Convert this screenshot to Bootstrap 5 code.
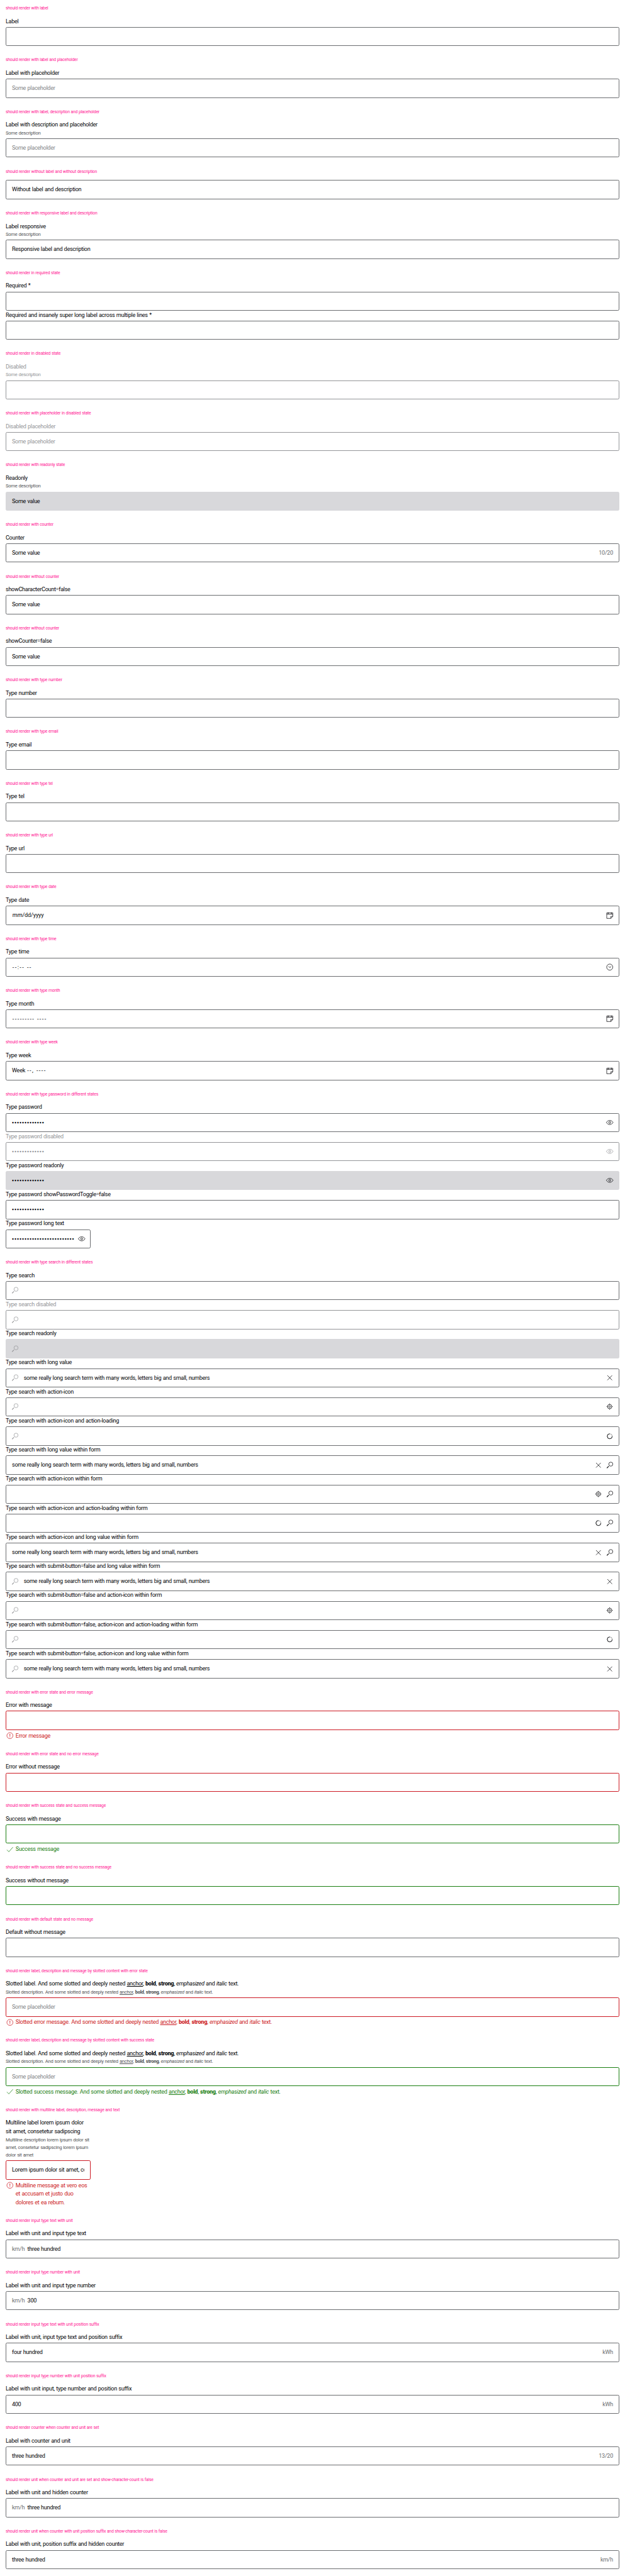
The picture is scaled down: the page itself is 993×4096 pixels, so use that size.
<!DOCTYPE html>
<html lang="en">
<head>
<meta charset="utf-8">
<meta name="viewport" content="width=device-width, initial-scale=1">
<title>Text field states</title>
<link href="https://cdn.jsdelivr.net/npm/bootstrap@5.3.0/dist/css/bootstrap.min.css" rel="stylesheet">
<style>
html{font-size:9.0273px}
body{font-family:Roboto,"Liberation Sans",sans-serif;font-size:1rem;line-height:1.5rem;color:#010205;letter-spacing:-.03em;word-spacing:.05em;background:#fff;overflow:hidden}
.case{padding:1rem}
.case h2{font-size:.75rem;line-height:.875rem;color:#ff1493;font-weight:400;letter-spacing:-.03em;word-spacing:.04em;margin:0 0 1rem;padding-top:.125rem}
.tag{padding-top:.0625rem;margin-bottom:-.0625rem}
.desc{font-size:.844rem;line-height:1.375rem;color:#535457;padding-top:.0625rem;margin-bottom:-.0625rem}
.field{display:flex;align-items:center;height:3.375rem;margin-top:.25rem;padding:.125rem 1rem 0;border:.125rem solid #6b6d70;border-radius:.25rem;font-size:1rem;line-height:1.5rem;color:#010205;white-space:nowrap;overflow:hidden;background:#fff}
.bare{margin-top:0}
.hint{color:#818386}
.unit{color:#6b6d70}
.off,.off .field,.off .desc{color:#949598;border-color:#949598}
.field.ro{background:#d8d8db;border-color:#d8d8db}
.bad .field{border-color:#cc1922}
.good .field{border-color:#197e10}
.msg{display:flex;gap:.25rem;margin-top:.25rem;color:#cc1922}
.msg>div{padding-top:.0625rem;margin-bottom:-.0625rem}
.good .msg{color:#197e10}
.narrow{width:15rem}
.ic{width:1.5rem;height:1.5rem;flex:none;fill:none;stroke:currentColor;stroke-width:1.3}
.field .ic{margin-top:-.125rem}
.end{margin-left:auto;margin-right:-.1875rem;display:flex;gap:.5rem}
.lead-ic{margin-left:-.1875rem;margin-right:.75rem;color:#949598}
.dots{letter-spacing:.104em;overflow:hidden;-webkit-text-stroke:.045rem currentColor}
.parts{letter-spacing:-.01em;padding-left:.09rem}
.dash{letter-spacing:.16em;word-spacing:0}
.case a{color:inherit;text-decoration:underline}
.case b,.case strong{font-weight:800}
</style>
</head>
<body>
<svg width="0" height="0" class="d-none">
<symbol id="find" viewBox="0 0 24 24"><circle cx="15" cy="9" r="5.7"/><path d="M9.2 14.8 3.8 20.2" stroke-width="2"/></symbol>
<symbol id="x" viewBox="0 0 24 24"><path d="M5.3 5.3l13.400 13.400M18.700 5.3l-13.400 13.400"/></symbol>
<symbol id="aim" viewBox="0 0 24 24"><circle cx="11.700" cy="11.700" r="6.2"/><circle cx="11.700" cy="11.700" r="2.500" stroke-width="1.4"/><path d="M11.700 3.200v2.500M11.700 17.700v2.500M3.200 11.700h2.500M17.700 11.700h2.500" stroke-width="1.4"/></symbol>
<symbol id="spin" viewBox="0 0 24 24"><circle cx="12" cy="12" r="7" opacity=".5"/><path d="M12 5A7 7 0 1 0 19 12" stroke-width="1.4"/></symbol>
<symbol id="cal" viewBox="0 0 24 24"><path d="M3.500 4.500h17.200v10l-5.500 5.500H3.500zM20.700 14.200h-5.500V20M3.500 8h17.200M7.700 3v5M16.700 3v5"/></symbol>
<symbol id="clock" viewBox="0 0 24 24"><circle cx="12" cy="12" r="8.600"/><path d="M8.300 9.800l3.900 3.400 4-2.700"/></symbol>
<symbol id="eye" viewBox="0 0 24 24"><path d="M2.500 12C7.500 4.200 16.500 4.200 21.500 12 16.500 19.800 7.500 19.800 2.500 12z"/><circle cx="12" cy="12" r="2.700" stroke-width="1.4"/></symbol>
<symbol id="warn" viewBox="0 0 24 24"><circle cx="12" cy="12" r="8.500"/><path d="M12 7v6.500M12 15v1.900" stroke-width="1.6"/></symbol>
<symbol id="ok" viewBox="0 0 24 24"><path d="M3.500 13l5.500 5.500L20.500 5.500"/></symbol>
</svg>
<main>
<section class="case"><h2>should render with label</h2><div class="tag">Label</div><div class="field"></div></section>
<section class="case"><h2>should render with label and placeholder</h2><div class="tag">Label with placeholder</div><div class="field hint">Some placeholder</div></section>
<section class="case"><h2>should render with label, description and placeholder</h2><div class="tag">Label with description and placeholder</div><div class="desc">Some description</div><div class="field hint">Some placeholder</div></section>
<section class="case"><h2>should render without label and without description</h2><div class="field bare">Without label and description</div></section>
<section class="case"><h2>should render with responsive label and description</h2><div class="tag">Label responsive</div><div class="desc">Some description</div><div class="field">Responsive label and description</div></section>
<section class="case"><h2>should render in required state</h2><div class="tag">Required *</div><div class="field"></div><div class="tag">Required and insanely super long label across multiple lines *</div><div class="field"></div></section>
<section class="case off"><h2>should render in disabled state</h2><div class="tag">Disabled</div><div class="desc">Some description</div><div class="field"></div></section>
<section class="case off"><h2>should render with placeholder in disabled state</h2><div class="tag">Disabled placeholder</div><div class="field">Some placeholder</div></section>
<section class="case"><h2>should render with readonly state</h2><div class="tag">Readonly</div><div class="desc">Some description</div><div class="field ro">Some value</div></section>
<section class="case"><h2>should render with counter</h2><div class="tag">Counter</div><div class="field">Some value<span class="unit ms-auto">10/20</span></div></section>
<section class="case"><h2>should render without counter</h2><div class="tag">showCharacterCount=false</div><div class="field">Some value</div></section>
<section class="case"><h2>should render without counter</h2><div class="tag">showCounter=false</div><div class="field">Some value</div></section>
<section class="case"><h2>should render with type number</h2><div class="tag">Type number</div><div class="field"></div></section>
<section class="case"><h2>should render with type email</h2><div class="tag">Type email</div><div class="field"></div></section>
<section class="case"><h2>should render with type tel</h2><div class="tag">Type tel</div><div class="field"></div></section>
<section class="case"><h2>should render with type url</h2><div class="tag">Type url</div><div class="field"></div></section>
<section class="case"><h2>should render with type date</h2><div class="tag">Type date</div><div class="field"><span class="parts">mm/dd/yyyy</span><span class="end"><svg class="ic"><use href="#cal"/></svg></span></div></section>
<section class="case"><h2>should render with type time</h2><div class="tag">Type time</div><div class="field"><span class="parts dash">--:-- --</span><span class="end"><svg class="ic"><use href="#clock"/></svg></span></div></section>
<section class="case"><h2>should render with type month</h2><div class="tag">Type month</div><div class="field"><span class="parts dash">--------- ----</span><span class="end"><svg class="ic"><use href="#cal"/></svg></span></div></section>
<section class="case"><h2>should render with type week</h2><div class="tag">Type week</div><div class="field"><span>Week&nbsp;</span><span class="parts dash">--, ----</span><span class="end"><svg class="ic"><use href="#cal"/></svg></span></div></section>
<section class="case"><h2>should render with type password in different states</h2>
<div class="tag">Type password</div><div class="field"><span class="dots">•••••••••••••</span><span class="end"><svg class="ic"><use href="#eye"/></svg></span></div>
<div class="off"><div class="tag">Type password disabled</div><div class="field"><span class="dots">•••••••••••••</span><span class="end"><svg class="ic"><use href="#eye"/></svg></span></div></div>
<div class="tag">Type password readonly</div><div class="field ro"><span class="dots">•••••••••••••</span><span class="end"><svg class="ic"><use href="#eye"/></svg></span></div>
<div class="tag">Type password showPasswordToggle=false</div><div class="field"><span class="dots">•••••••••••••</span></div>
<div class="tag">Type password long text</div><div class="field narrow"><span class="dots">•••••••••••••••••••••••••••••</span><span class="end ps-2"><svg class="ic"><use href="#eye"/></svg></span></div>
</section>
<section class="case"><h2>should render with type search in different states</h2>
<div class="tag">Type search</div><div class="field"><svg class="ic lead-ic"><use href="#find"/></svg></div>
<div class="off"><div class="tag">Type search disabled</div><div class="field"><svg class="ic lead-ic"><use href="#find"/></svg></div></div>
<div class="tag">Type search readonly</div><div class="field ro"><svg class="ic lead-ic"><use href="#find"/></svg></div>
<div class="tag">Type search with long value</div><div class="field"><svg class="ic lead-ic"><use href="#find"/></svg>some really long search term with many words, letters big and small, numbers<span class="end"><svg class="ic"><use href="#x"/></svg></span></div>
<div class="tag">Type search with action-icon</div><div class="field"><svg class="ic lead-ic"><use href="#find"/></svg><span class="end"><svg class="ic"><use href="#aim"/></svg></span></div>
<div class="tag">Type search with action-icon and action-loading</div><div class="field"><svg class="ic lead-ic"><use href="#find"/></svg><span class="end"><svg class="ic"><use href="#spin"/></svg></span></div>
<div class="tag">Type search with long value within form</div><div class="field">some really long search term with many words, letters big and small, numbers<span class="end"><svg class="ic"><use href="#x"/></svg><svg class="ic"><use href="#find"/></svg></span></div>
<div class="tag">Type search with action-icon within form</div><div class="field"><span class="end"><svg class="ic"><use href="#aim"/></svg><svg class="ic"><use href="#find"/></svg></span></div>
<div class="tag">Type search with action-icon and action-loading within form</div><div class="field"><span class="end"><svg class="ic"><use href="#spin"/></svg><svg class="ic"><use href="#find"/></svg></span></div>
<div class="tag">Type search with action-icon and long value within form</div><div class="field">some really long search term with many words, letters big and small, numbers<span class="end"><svg class="ic"><use href="#x"/></svg><svg class="ic"><use href="#find"/></svg></span></div>
<div class="tag">Type search with submit-button=false and long value within form</div><div class="field"><svg class="ic lead-ic"><use href="#find"/></svg>some really long search term with many words, letters big and small, numbers<span class="end"><svg class="ic"><use href="#x"/></svg></span></div>
<div class="tag">Type search with submit-button=false and action-icon within form</div><div class="field"><svg class="ic lead-ic"><use href="#find"/></svg><span class="end"><svg class="ic"><use href="#aim"/></svg></span></div>
<div class="tag">Type search with submit-button=false, action-icon and action-loading within form</div><div class="field"><svg class="ic lead-ic"><use href="#find"/></svg><span class="end"><svg class="ic"><use href="#spin"/></svg></span></div>
<div class="tag">Type search with submit-button=false, action-icon and long value within form</div><div class="field"><svg class="ic lead-ic"><use href="#find"/></svg>some really long search term with many words, letters big and small, numbers<span class="end"><svg class="ic"><use href="#x"/></svg></span></div>
</section>
<section class="case bad"><h2>should render with error state and error message</h2><div class="tag">Error with message</div><div class="field"></div><div class="msg"><svg class="ic"><use href="#warn"/></svg><div>Error message</div></div></section>
<section class="case bad"><h2>should render with error state and no error message</h2><div class="tag">Error without message</div><div class="field"></div></section>
<section class="case good"><h2>should render with success state and success message</h2><div class="tag">Success with message</div><div class="field"></div><div class="msg"><svg class="ic"><use href="#ok"/></svg><div>Success message</div></div></section>
<section class="case good"><h2>should render with success state and no success message</h2><div class="tag">Success without message</div><div class="field"></div></section>
<section class="case"><h2>should render with default state and no message</h2><div class="tag">Default without message</div><div class="field"></div></section>
<section class="case bad"><h2>should render label, description and message by slotted content with error state</h2><div class="tag">Slotted label. And some slotted and deeply nested <a href="#">anchor</a>, <b>bold</b>, <strong>strong</strong>, <em>emphasized</em> and <i>italic</i> text.</div><div class="desc">Slotted description. And some slotted and deeply nested <a href="#">anchor</a>, <b>bold</b>, <strong>strong</strong>, <em>emphasized</em> and <i>italic</i> text.</div><div class="field hint">Some placeholder</div><div class="msg"><svg class="ic"><use href="#warn"/></svg><div>Slotted error message. And some slotted and deeply nested <a href="#">anchor</a>, <b>bold</b>, <strong>strong</strong>, <em>emphasized</em> and <i>italic</i> text.</div></div></section>
<section class="case good"><h2>should render label, description and message by slotted content with success state</h2><div class="tag">Slotted label. And some slotted and deeply nested <a href="#">anchor</a>, <b>bold</b>, <strong>strong</strong>, <em>emphasized</em> and <i>italic</i> text.</div><div class="desc">Slotted description. And some slotted and deeply nested <a href="#">anchor</a>, <b>bold</b>, <strong>strong</strong>, <em>emphasized</em> and <i>italic</i> text.</div><div class="field hint">Some placeholder</div><div class="msg"><svg class="ic"><use href="#ok"/></svg><div>Slotted success message. And some slotted and deeply nested <a href="#">anchor</a>, <b>bold</b>, <strong>strong</strong>, <em>emphasized</em> and <i>italic</i> text.</div></div></section>
<section class="case bad"><h2>should render with multiline label, description, message and text</h2><div class="narrow"><div class="tag text-nowrap">Multiline label lorem ipsum dolor<br>sit amet, consetetur sadipscing</div><div class="desc text-nowrap">Multiline description lorem ipsum dolor sit<br>amet, consetetur sadipscing lorem ipsum<br>dolor sit amet</div><div class="field"><span class="overflow-hidden">Lorem ipsum dolor sit amet, consetetur</span></div><div class="msg"><svg class="ic"><use href="#warn"/></svg><div>Multiline message at vero eos<br>et accusam et justo duo<br>dolores et ea rebum.</div></div></div></section>
<section class="case"><h2>should render input type text with unit</h2><div class="tag">Label with unit and input type text</div><div class="field"><span class="unit me-2">km/h</span>three hundred</div></section>
<section class="case"><h2>should render input type number with unit</h2><div class="tag">Label with unit and input type number</div><div class="field"><span class="unit me-2">km/h</span>300</div></section>
<section class="case"><h2>should render input type text with unit position suffix</h2><div class="tag">Label with unit, input type text and position suffix</div><div class="field">four hundred<span class="unit ms-auto">kWh</span></div></section>
<section class="case"><h2>should render input type number with unit position suffix</h2><div class="tag">Label with unit input, type number and position suffix</div><div class="field">400<span class="unit ms-auto">kWh</span></div></section>
<section class="case"><h2>should render counter when counter and unit are set</h2><div class="tag">Label with counter and unit</div><div class="field">three hundred<span class="unit ms-auto">13/20</span></div></section>
<section class="case"><h2>should render unit when counter and unit are set and show-character-count is false</h2><div class="tag">Label with unit and hidden counter</div><div class="field"><span class="unit me-2">km/h</span>three hundred</div></section>
<section class="case pb-0"><h2>should render unit when counter with unit position suffix and show-character-count is false</h2><div class="tag">Label with unit, position suffix and hidden counter</div><div class="field">three hundred<span class="unit ms-auto">km/h</span></div></section>
</main>
<script src="https://cdn.jsdelivr.net/npm/bootstrap@5.3.0/dist/js/bootstrap.bundle.min.js"></script>
</body>
</html>
